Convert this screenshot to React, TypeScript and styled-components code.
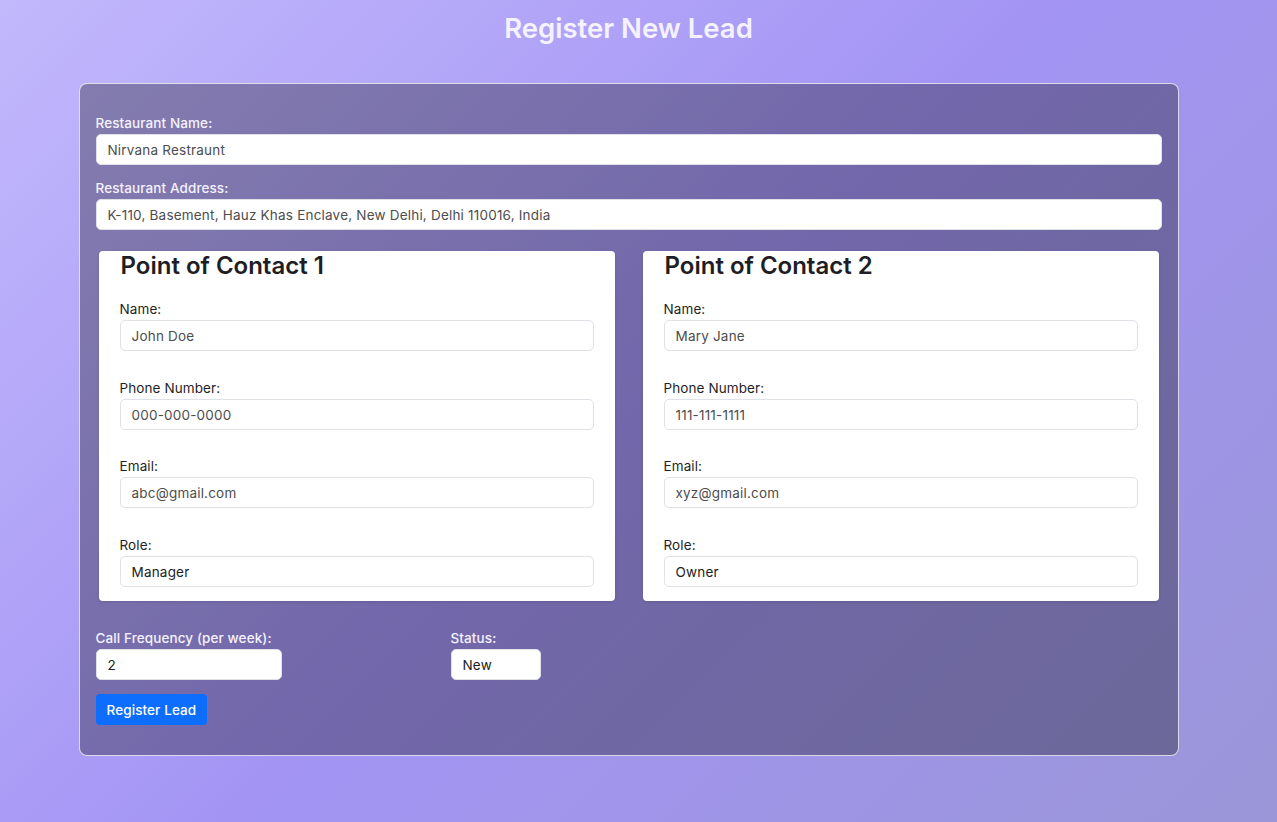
import React from "react";
import styled, { createGlobalStyle } from "styled-components";

const GlobalStyle = createGlobalStyle`
  html, body { margin: 0; padding: 0; }
  body {
    min-height: 100vh;
    font-family: Inter, "Open Sans", sans-serif;
    background: linear-gradient(135deg, #c2b8fc 0%, #a394f4 50%, #9a96d8 100%);
    background-attachment: fixed;
  }
  * { box-sizing: border-box; }
`;

const Page = styled.div`
  min-height: 100vh;
  padding: 12px 20px 40px 0;
`;

const Title = styled.h1`
  margin: 0;
  text-align: center;
  font-size: 27.5px;
  line-height: 32px;
  font-weight: 600;
  color: #f5f2ff;
`;

const Card = styled.form`
  width: 1100px;
  margin: 39px auto 0;
  padding: 30px 16px 30px;
  border: 1px solid rgba(255, 255, 255, 0.75);
  border-radius: 8px;
  background: rgba(0, 0, 0, 0.3);
  display: flex;
  flex-direction: column;
`;

const Field = styled.div<{ $mb?: number }>`
  display: flex;
  flex-direction: column;
  gap: 2px;
  margin-bottom: ${(p) => p.$mb ?? 0}px;
`;

const Label = styled.label<{ $light?: boolean }>`
  font-size: 13.5px;
  line-height: 18px;
  letter-spacing: 0.1px;
  font-weight: ${(p) => (p.$light ? 500 : 400)};
  color: ${(p) => (p.$light ? "#f4f2ff" : "#1f1f24")};
`;

const TextInput = styled.input<{ $width?: number; $dark?: boolean }>`
  height: 31px;
  width: ${(p) => (p.$width ? `${p.$width}px` : "100%")};
  padding: 0 11px;
  font-family: inherit;
  font-size: 13.5px;
  letter-spacing: 0.2px;
  color: ${(p) => (p.$dark ? "#222" : "#4d4d4d")};
  background: #fff;
  border: 1px solid #dee2e6;
  border-radius: 5px;
  outline: none;
`;

const Contacts = styled.div`
  display: grid;
  grid-template-columns: 1fr 1fr;
  gap: 28px;
  padding: 0 3px;
  margin: 21px 0 28px;
`;

const ContactBox = styled.div`
  background: #fff;
  border-radius: 4px;
  padding: 0 21px 14px;
  box-shadow: 0 1px 3px rgba(0, 0, 0, 0.12);
  display: flex;
  flex-direction: column;
`;

const ContactTitle = styled.h2`
  margin: 0 0 19px 1px;
  font-size: 24px;
  line-height: 30px;
  font-weight: 600;
  color: #1e1e24;
`;

const BottomRow = styled.div`
  display: grid;
  grid-template-columns: 355px 1fr;
  margin-bottom: 14px;
`;

const Button = styled.button`
  align-self: flex-start;
  height: 31px;
  padding: 0 11px;
  border: none;
  border-radius: 4px;
  background: #0d6efd;
  color: #fff;
  font-family: inherit;
  font-size: 13.5px;
  letter-spacing: 0.1px;
  font-weight: 500;
  cursor: pointer;
`;

type Contact = { n: number; name: string; phone: string; email: string; role: string };

const contacts: Contact[] = [
  { n: 1, name: "John Doe", phone: "000-000-0000", email: "abc@gmail.com", role: "Manager" },
  { n: 2, name: "Mary Jane", phone: "111-111-1111", email: "xyz@gmail.com", role: "Owner" },
];

function ContactCard({ c }: { c: Contact }) {
  return (
    <ContactBox>
      <ContactTitle>Point of Contact {c.n}</ContactTitle>
      <Field $mb={28}>
        <Label>Name:</Label>
        <TextInput defaultValue={c.name} />
      </Field>
      <Field $mb={27}>
        <Label>Phone Number:</Label>
        <TextInput defaultValue={c.phone} />
      </Field>
      <Field $mb={28}>
        <Label>Email:</Label>
        <TextInput defaultValue={c.email} />
      </Field>
      <Field>
        <Label>Role:</Label>
        <TextInput $dark defaultValue={c.role} />
      </Field>
    </ContactBox>
  );
}

export default function App() {
  return (
    <>
      <GlobalStyle />
      <Page>
        <Title>Register New Lead</Title>
        <Card onSubmit={(e) => e.preventDefault()}>
          <Field $mb={14}>
            <Label $light>Restaurant Name:</Label>
            <TextInput defaultValue="Nirvana Restraunt" />
          </Field>
          <Field>
            <Label $light>Restaurant Address:</Label>
            <TextInput defaultValue="K-110, Basement, Hauz Khas Enclave, New Delhi, Delhi 110016, India" />
          </Field>
          <Contacts>
            {contacts.map((c) => (
              <ContactCard key={c.n} c={c} />
            ))}
          </Contacts>
          <BottomRow>
            <Field>
              <Label $light>Call Frequency (per week):</Label>
              <TextInput $width={186} $dark defaultValue="2" />
            </Field>
            <Field>
              <Label $light>Status:</Label>
              <TextInput $width={90} $dark defaultValue="New" />
            </Field>
          </BottomRow>
          <Button type="submit">Register Lead</Button>
        </Card>
      </Page>
    </>
  );
}
